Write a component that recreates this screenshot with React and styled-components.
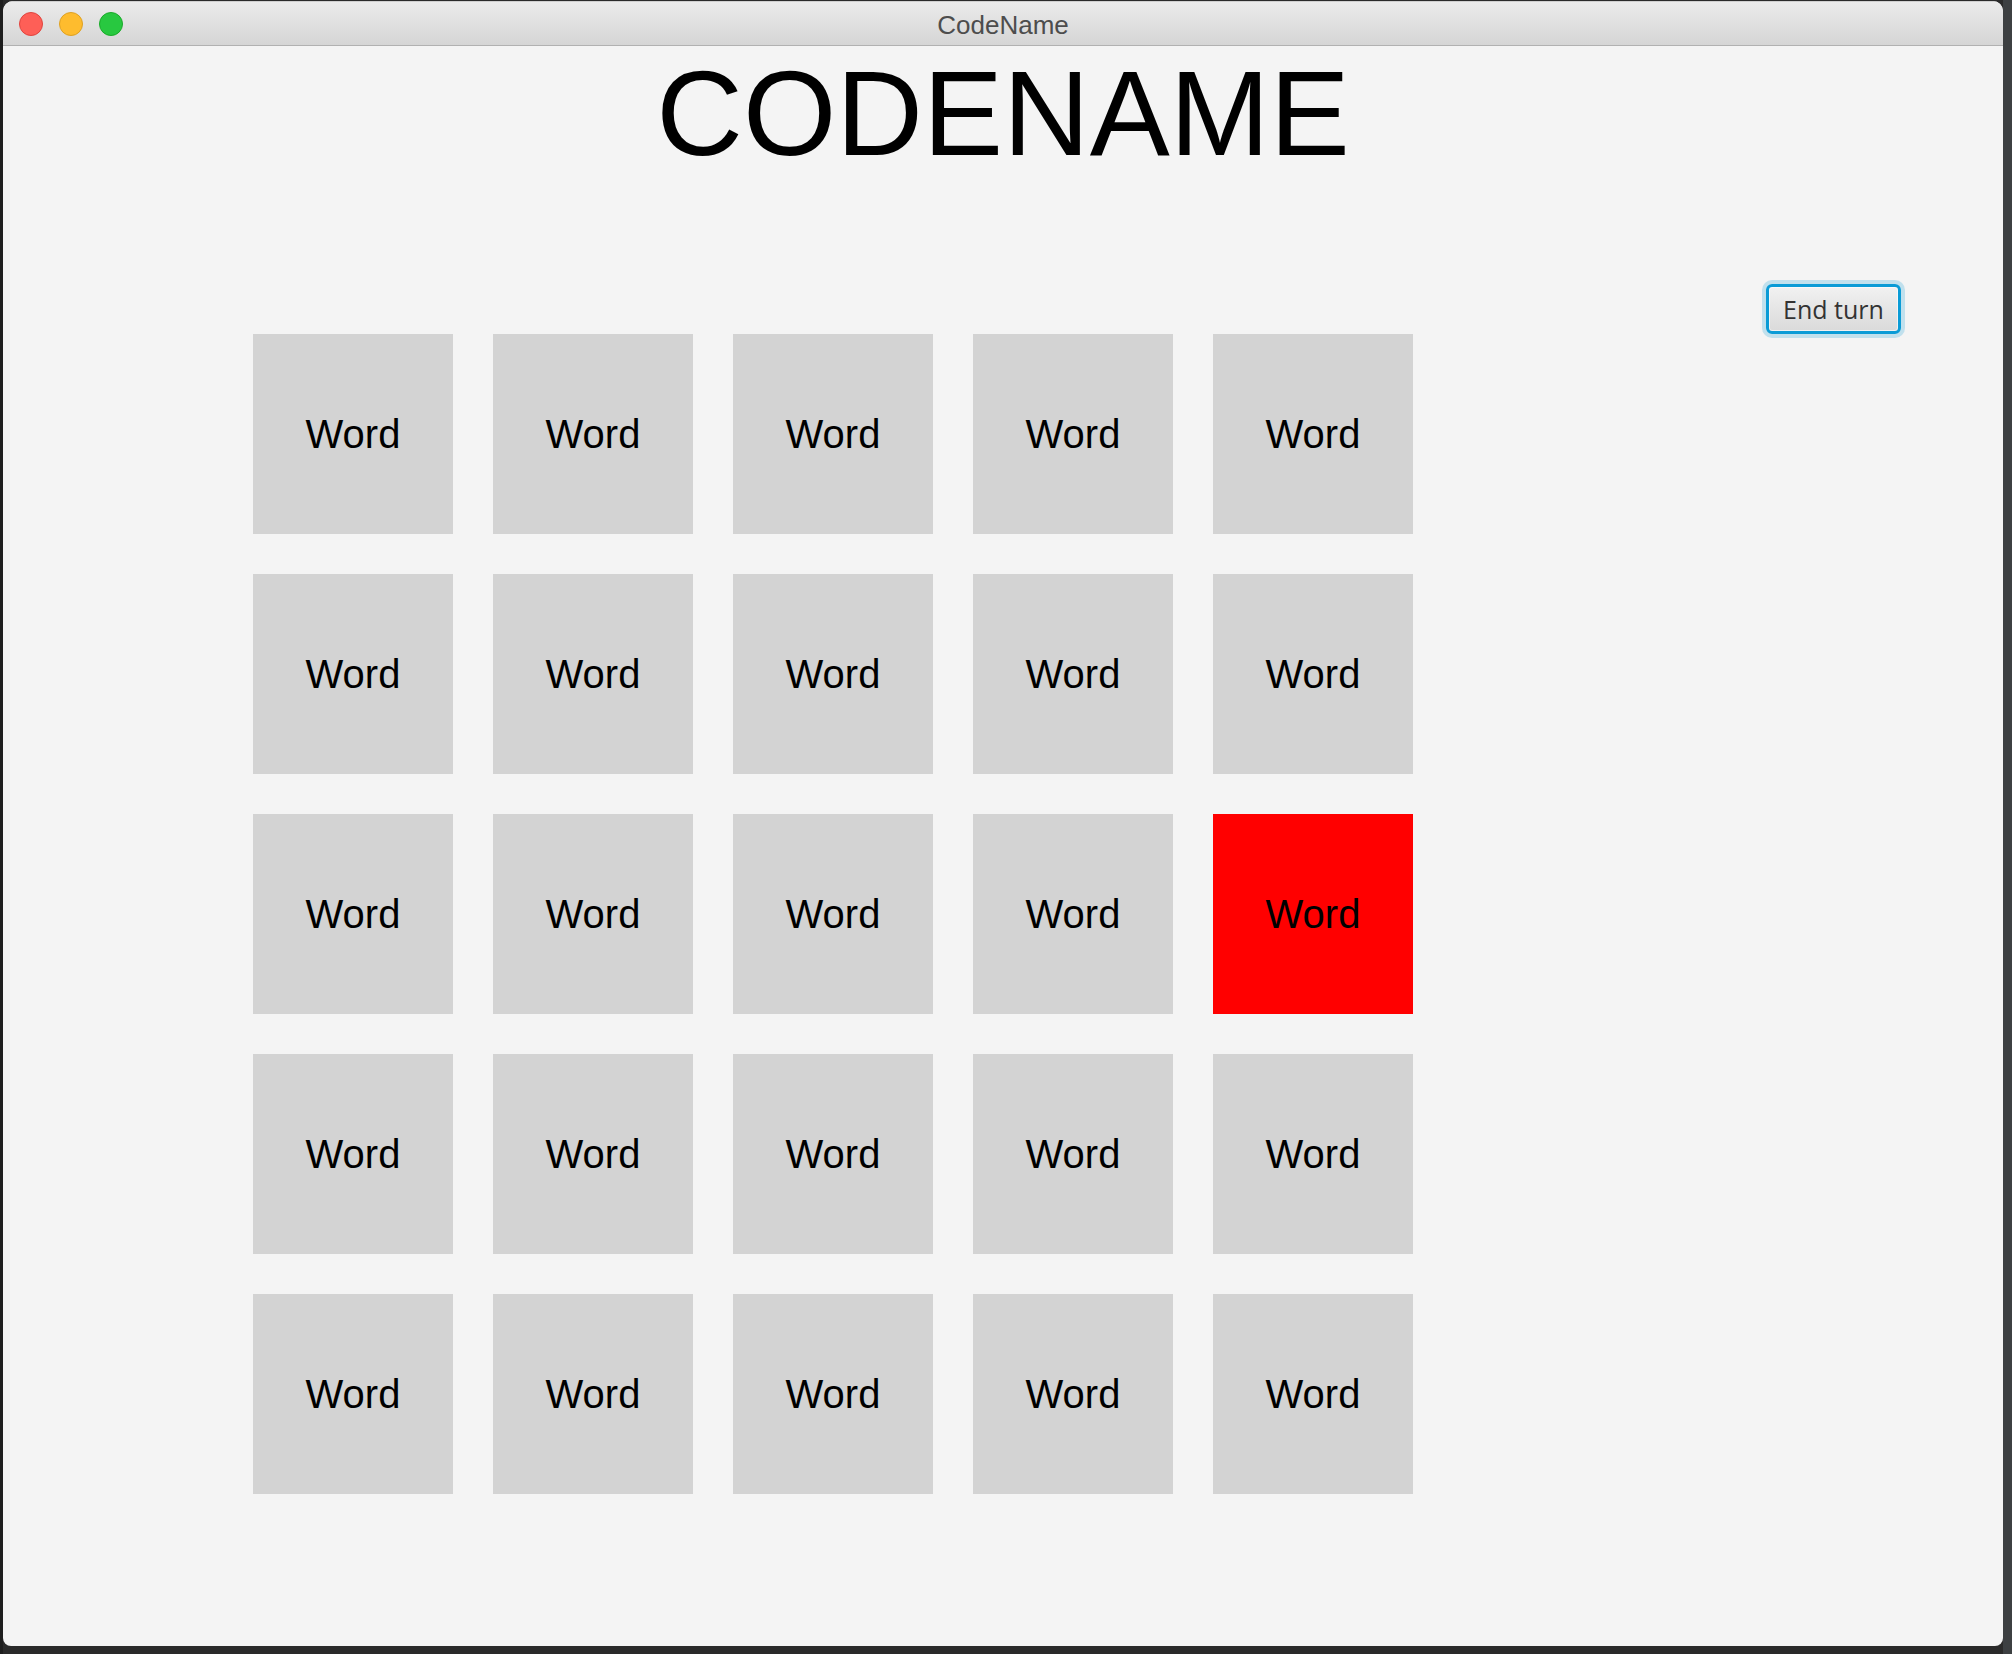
import React from "react";
import styled, { createGlobalStyle } from "styled-components";

const Global = createGlobalStyle`
  html, body { margin: 0; padding: 0; }
  body {
    width: 2012px;
    height: 1654px;
    background: #242424;
    overflow: hidden;
    font-family: "Liberation Sans", Arial, sans-serif;
  }
`;

const Desktop = styled.div`
  width: 2012px;
  height: 1654px;
  padding: 1px 9px 8px 3px;
  box-sizing: border-box;
  background: linear-gradient(to right, #1e1e1e 0, #1e1e1e 3px, #2a2a2a 3px, #2a2a2a 2003px, #3d4042 2003px);
`;

const Window = styled.div`
  width: 2000px;
  height: 1645px;
  display: flex;
  flex-direction: column;
  background: #f4f4f4;
  border-radius: 10px 10px 8px 8px;
  overflow: hidden;
`;

const TitleBar = styled.div`
  position: relative;
  flex: none;
  display: flex;
  align-items: center;
  justify-content: center;
  padding-top: 2px;
  background: linear-gradient(to bottom, #ebebeb, #d5d5d5);
  border-top: 1px solid #cfcfcf;
  border-bottom: 1px solid #b1b1b1;
  box-sizing: border-box;
  height: 45px;
`;

const Lights = styled.div`
  position: absolute;
  left: 16px;
  top: 10px;
  display: flex;
  gap: 16px;
`;

const Light = styled.span`
  width: 22px;
  height: 22px;
  border-radius: 50%;
  background: ${(p) => p.$fill};
  border: 1px solid ${(p) => p.$edge};
`;

const WindowTitle = styled.span`
  font-family: "Liberation Sans", Arial, sans-serif;
  font-size: 26px;
  color: #4d4d4d;
  line-height: 1;
`;

const Content = styled.div`
  flex: 1;
  display: flex;
  flex-direction: column;
`;

const Heading = styled.h1`
  margin: 7px 0 0;
  font-family: "Liberation Sans", Arial, sans-serif;
  font-weight: normal;
  font-size: 120px;
  line-height: 120px;
  text-align: center;
  color: #000;
`;

const Main = styled.div`
  margin-top: 111px;
  display: flex;
  justify-content: space-between;
  align-items: flex-start;
  padding: 0 102px 0 250px;
`;

const Board = styled.div`
  margin-top: 50px;
  display: grid;
  grid-template-columns: repeat(5, 200px);
  grid-auto-rows: 200px;
  gap: 40px;
`;

const Card = styled.div`
  display: flex;
  align-items: center;
  justify-content: center;
  background: ${(p) => (p.$red ? "#ff0000" : "#d3d3d3")};
  font-family: "Liberation Sans", Arial, sans-serif;
  font-size: 40px;
  color: #000;
`;

const EndButton = styled.button`
  width: 135px;
  height: 50px;
  box-sizing: border-box;
  border: 3px solid #0a9bd6;
  border-radius: 6px;
  background: linear-gradient(to bottom, #f1f1f1, #dadada);
  box-shadow: inset 0 0 0 1px rgba(255, 255, 255, 0.6), 0 0 0 4px rgba(10, 155, 214, 0.22);
  font-family: "Open Sans", "Liberation Sans", sans-serif;
  font-size: 25px;
  color: #333;
  padding: 0;
  line-height: 1;
`;

export default function App() {
  const cards = Array.from({ length: 25 }, (_, i) => i);
  return (
    <>
      <Global />
      <Desktop>
        <Window>
          <TitleBar>
            <Lights>
              <Light $fill="#fe5f57" $edge="#e0443e" />
              <Light $fill="#febc2e" $edge="#dea123" />
              <Light $fill="#28c840" $edge="#1aab29" />
            </Lights>
            <WindowTitle>CodeName</WindowTitle>
          </TitleBar>
          <Content>
            <Heading>CODENAME</Heading>
            <Main>
              <Board>
                {cards.map((i) => (
                  <Card key={i} $red={i === 14}>
                    Word
                  </Card>
                ))}
              </Board>
              <EndButton>End turn</EndButton>
            </Main>
          </Content>
        </Window>
      </Desktop>
    </>
  );
}
